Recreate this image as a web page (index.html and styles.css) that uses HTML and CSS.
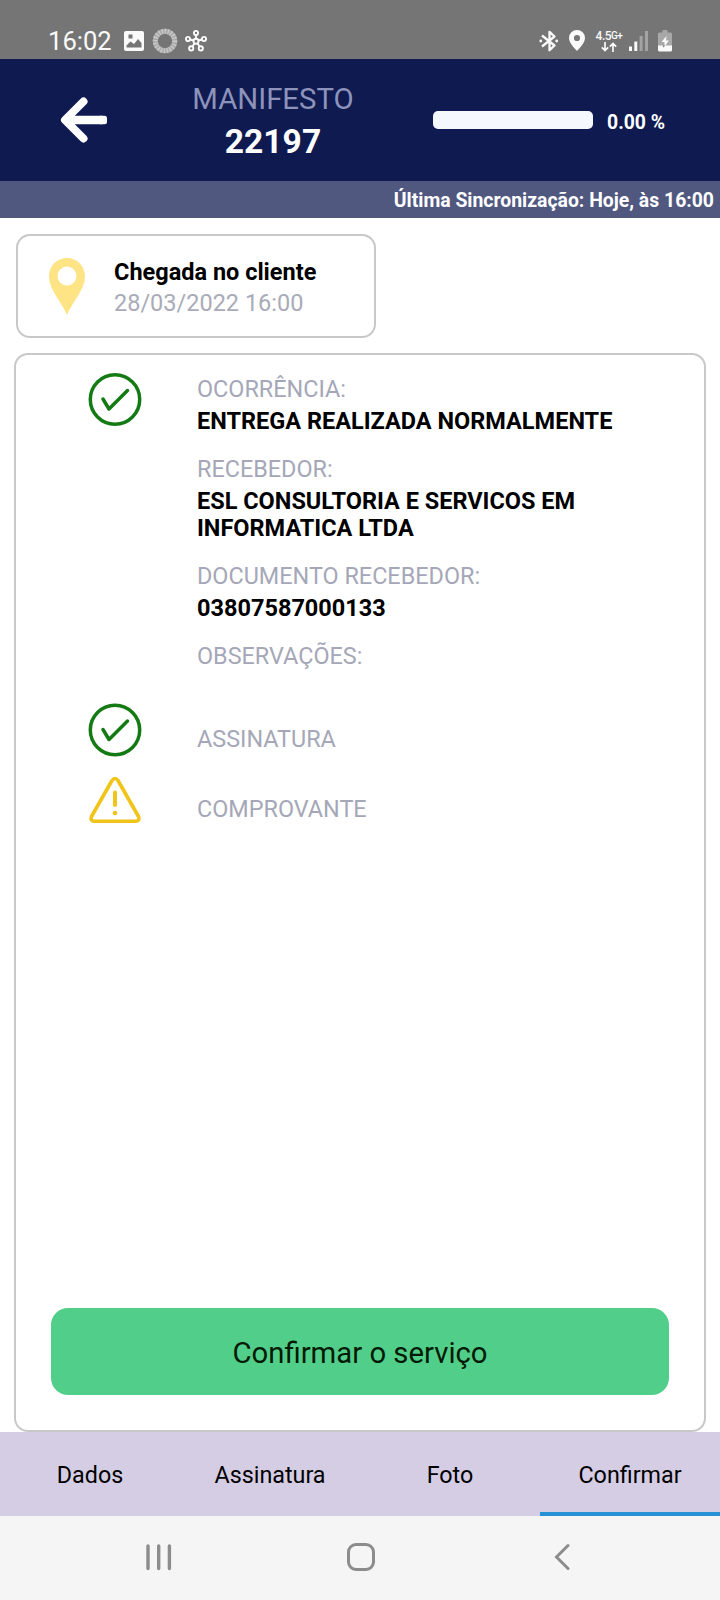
FILE: index.html
```
<!DOCTYPE html>
<html lang="pt-BR">
<head>
  <meta charset="UTF-8" />
  <meta name="viewport" content="width=device-width,initial-scale=1.0" />
  <title>Manifesto 22197</title>
  <link rel="stylesheet" href="styles.css">
</head>
<body>
  <div class="status-bar">
    <span class="clock">16:02</span>
    <svg class="ic-image" width="20" height="20" viewBox="0 0 20 20">
      <path fill="#fafafa" fill-rule="evenodd" d="M2 0H18Q20 0 20 2V18Q20 20 18 20H2Q0 20 0 18V2Q0 0 2 0ZM4.500 3.500V7.500H8.500V3.500ZM2.500 16.500H17.500V12L14 8L10 13L6.500 10.500L2.500 14.500Z"/>
    </svg>
    <svg class="ic-ring" width="26" height="26" viewBox="0 0 26 26">
      <circle cx="13" cy="13" r="9.700" fill="none" stroke="#a8a8a8" stroke-width="5"/>
      <circle cx="13" cy="13" r="9.700" fill="none" stroke="#c8c8c8" stroke-width="5" stroke-dasharray="1.500 1.500"/>
    </svg>
    <svg class="ic-hub" width="22" height="22" viewBox="0 0 22 22" fill="none" stroke="#fafafa" stroke-width="1.900">
      <path d="M11 5V8M5 9.500L8.500 10.500M17 9.500L13.500 10.500M7.300 16.500L9.500 13.500M14.700 16.500L12.500 13.500"/>
      <circle cx="11" cy="11.300" r="2.500"/>
      <circle cx="11" cy="3" r="2.100"/>
      <circle cx="3" cy="9" r="2.100"/>
      <circle cx="19" cy="9" r="2.100"/>
      <circle cx="6.200" cy="18.400" r="2.100"/>
      <circle cx="15.800" cy="18.400" r="2.100"/>
    </svg>
    <div class="status-right">
      <svg width="20" height="22" viewBox="0 0 20 22" fill="none" stroke="#fafafa" stroke-width="2.300">
        <path stroke-linejoin="round" d="M3 5.500L15.500 15.500L10.500 20.200V1.800L15.500 6.500L3 16.500"/>
        <circle cx="1.800" cy="11" r="1.400" fill="#fafafa" stroke="none"/>
        <circle cx="17.700" cy="11" r="1.400" fill="#fafafa" stroke="none"/>
      </svg>
      <svg class="ic-place" width="16" height="21" viewBox="0 0 16 21">
        <path fill="#fafafa" fill-rule="evenodd" d="M8 0A8 8 0 0 1 16 8C16 13 10.500 18 8 21C5.500 18 0 13 0 8A8 8 0 0 1 8 0ZM8 4.900A3.100 3.100 0 1 0 8 11.100A3.100 3.100 0 1 0 8 4.900Z"/>
      </svg>
      <div class="network">
        <span class="network-type">4.5<small>G+</small></span>
        <svg width="16" height="10" viewBox="0 0 16 10" fill="none" stroke="#fafafa" stroke-width="1.700">
          <path d="M4 0V8.500M0.800 5.300L4 8.500L7.200 5.300M12 10V1.500M8.800 4.700L12 1.500L15.200 4.700"/>
        </svg>
      </div>
      <svg class="ic-signal" width="19" height="20" viewBox="0 0 19 20">
        <path fill="#fafafa" d="M0 15.500H3V20H0ZM5.300 10.500H8.300V20H5.300Z"/>
        <path fill="#a3a3a3" d="M10.600 5H13.600V20H10.600ZM16 0H19V20H16Z"/>
      </svg>
      <svg class="ic-battery" width="14" height="22" viewBox="0 0 14 22">
        <path fill="#a8a8a8" d="M4.500 0H9.500V2.500H12.500Q14 2.500 14 4V16H0V4Q0 2.500 1.500 2.500H4.500Z"/>
        <path fill="#fafafa" d="M0 15.500H14V20Q14 21.500 12.500 21.500H1.500Q0 21.500 0 20ZM8.500 6L3.500 12H6.500V16.500L11 10.500H8Z"/>
        <path fill="#777" d="M4.500 15.500H7L5.500 17.500Z"/>
      </svg>
    </div>
  </div>

  <header class="header">
    <svg class="back" width="48" height="46" viewBox="0 0 48 46">
      <path fill="none" stroke="#fff" stroke-width="8" stroke-linecap="round" stroke-linejoin="round" d="M23.500 4.500L5 23L23.500 41.500"/>
      <path fill="none" stroke="#fff" stroke-width="8.500" d="M8 23H42"/>
      <rect x="38" y="18.700" width="9" height="8.600" rx="2.500" fill="#fff"/>
    </svg>
    <div class="manifest">
      <div class="manifest-label">MANIFESTO</div>
      <div class="manifest-number">22197</div>
    </div>
    <div class="progress"></div>
    <div class="percent">0.00 %</div>
  </header>
  <div class="sync">Última Sincronização: Hoje, às 16:00</div>

  <main class="content">
    <div class="arrival">
      <svg width="36" height="57" viewBox="0 0 36 57">
        <path fill="#fee485" fill-rule="evenodd" d="M18 0C8 0 0 8 0 18.500C0 32 13 44 18 57C23 44 36 32 36 18.500C36 8 28 0 18 0ZM18 8.500A9.500 9.500 0 1 1 18 27.500A9.500 9.500 0 1 1 18 8.500Z"/>
      </svg>
      <div class="arrival-text">
        <div class="value">Chegada no cliente</div>
        <div class="arrival-date">28/03/2022 16:00</div>
      </div>
    </div>

    <div class="panel">
      <div class="row row-info">
        <svg width="54" height="54" viewBox="0 0 54 54" fill="none" stroke="#147a14">
          <circle cx="27" cy="26.500" r="24.700" stroke-width="3.500"/>
          <path stroke-width="3.500" stroke-linecap="round" stroke-linejoin="round" d="M15 26L21 36L39.500 17.500"/>
        </svg>
        <div class="fields">
          <div class="field">
            <div class="label">OCORRÊNCIA:</div>
            <div class="value">ENTREGA REALIZADA NORMALMENTE</div>
          </div>
          <div class="field">
            <div class="label">RECEBEDOR:</div>
            <div class="value">ESL CONSULTORIA E SERVICOS EM INFORMATICA LTDA</div>
          </div>
          <div class="field">
            <div class="label">DOCUMENTO RECEBEDOR:</div>
            <div class="value">03807587000133</div>
          </div>
          <div class="field">
            <div class="label">OBSERVAÇÕES:</div>
          </div>
        </div>
      </div>
      <div class="row row-signature">
        <svg width="54" height="54" viewBox="0 0 54 54" fill="none" stroke="#147a14">
          <circle cx="27" cy="27" r="24.700" stroke-width="3.500"/>
          <path stroke-width="3.500" stroke-linecap="round" stroke-linejoin="round" d="M15 26.500L21 36.500L39.500 18"/>
        </svg>
        <div class="label">ASSINATURA</div>
      </div>
      <div class="row row-receipt">
        <svg width="54" height="48" viewBox="0 0 54 48" fill="none" stroke="#f0c419">
          <path stroke-width="3.600" stroke-linejoin="round" d="M24 4.500Q27 0.500 30 4.500L50.500 40.500Q52 45 48 45.200H6Q2 45 3.500 40.500Z"/>
          <path stroke-width="4" stroke-linecap="round" d="M27 16.500V29"/>
          <circle cx="27" cy="37" r="2.300" fill="#f0c419" stroke="none"/>
        </svg>
        <div class="label">COMPROVANTE</div>
      </div>
      <button class="confirm">Confirmar o serviço</button>
    </div>
  </main>

  <nav class="tabs">
    <a class="tab">Dados</a>
    <a class="tab">Assinatura</a>
    <a class="tab">Foto</a>
    <a class="tab active">Confirmar</a>
  </nav>

  <div class="nav-bar">
    <svg width="26" height="28" viewBox="0 0 26 28" fill="none" stroke="#8c8c8c" stroke-width="3.400" stroke-linecap="round">
      <path d="M2 3V25.500M12.700 3V25.500M23.400 3V25.500"/>
    </svg>
    <svg class="home" width="30" height="30" viewBox="0 0 30 30">
      <rect x="2.500" y="2.500" width="25" height="25" rx="7.500" fill="none" stroke="#8c8c8c" stroke-width="3"/>
    </svg>
    <svg width="16" height="28" viewBox="0 0 16 28">
      <path fill="none" stroke="#8c8c8c" stroke-width="3" stroke-linecap="round" stroke-linejoin="miter" d="M14 2.500L2.500 14L14 25.500"/>
    </svg>
  </div>
</body>
</html>
```
FILE: styles.css
```
* {
  box-sizing: border-box;
}

body {
  margin: 0;
  height: 1600px;
  display: flex;
  flex-direction: column;
  background: #fff;
  font-family: Roboto, sans-serif;
  color: #000;
}

svg {
  display: block;
  flex: none;
}

.status-bar {
  height: 59px;
  display: flex;
  align-items: center;
  padding: 22px 48px 0 48px;
  background: #757575;
  color: #fafafa;
}

.clock {
  width: 65px;
  padding-top: 1px;
  font-size: 25.6px;
  line-height: 30px;
}

.ic-image {
  margin-left: 11px;
}

.ic-ring {
  margin-left: 8px;
}

.ic-hub {
  margin-left: 7px;
}

.status-right {
  display: flex;
  align-items: center;
  margin-left: auto;
}

.ic-place {
  margin-left: 10px;
}

.network {
  display: flex;
  flex-direction: column;
  align-items: center;
  width: 28px;
  margin-left: 10px;
}

.network-type {
  font-size: 12px;
  font-weight: 500;
  line-height: 11px;
  letter-spacing: -0.5px;
  white-space: nowrap;
}

.network-type small {
  font-size: 10px;
  vertical-align: 1px;
}

.ic-signal {
  margin-left: 6px;
}

.ic-battery {
  margin-left: 10px;
}

.header {
  height: 122px;
  display: flex;
  align-items: center;
  padding-left: 60px;
  background: #0f1a50;
  color: #fff;
}

.manifest {
  width: 200px;
  margin-left: 65px;
  text-align: center;
}

.manifest-label {
  padding-top: 1px;
  font-size: 29.3px;
  line-height: 36px;
  color: #8d93ba;
}

.manifest-number {
  margin-top: 5px;
  font-size: 33.6px;
  font-weight: 700;
  line-height: 39px;
}

.progress {
  width: 160px;
  height: 18px;
  margin-left: 60px;
  border-radius: 5px;
  background: #f5f8fc;
}

.percent {
  margin: 4px 0 0 14px;
  font-size: 19.4px;
  font-weight: 700;
}

.sync {
  height: 37px;
  padding-right: 6px;
  background: #505880;
  color: #fff;
  font-size: 19.4px;
  font-weight: 700;
  line-height: 40px;
  text-align: right;
}

.content {
  flex: 1;
  display: flex;
  flex-direction: column;
  padding: 16px 14px 0 14px;
}

.arrival {
  width: 360px;
  height: 104px;
  display: flex;
  align-items: center;
  gap: 29px;
  margin-left: 2px;
  padding-left: 31px;
  border: 2px solid #c8c8ca;
  border-radius: 14px;
}

.arrival-text {
  padding-top: 4px;
}

.arrival-date {
  margin-top: 4px;
  font-size: 23.5px;
  line-height: 27px;
  color: #a9abb8;
}

.panel {
  flex: 1;
  display: flex;
  flex-direction: column;
  margin-top: 15px;
  padding: 18px 35px 35px 35px;
  border: 2px solid #c8c8ca;
  border-radius: 14px;
}

.row {
  display: flex;
  gap: 55px;
  padding-left: 37px;
}

.row-info {
  height: 330px;
}

.row-signature {
  height: 73px;
}

.row-signature .label {
  margin-top: 23px;
}

.row-receipt .label {
  margin-top: 20px;
}

.fields {
  width: 430px;
  padding-top: 3px;
}

.field {
  margin-bottom: 21.5px;
}

.label {
  font-size: 23.4px;
  line-height: 27px;
  color: #a5a7b8;
}

.value {
  font-size: 23.5px;
  font-weight: 700;
  line-height: 27px;
}

.field .value {
  margin-top: 4.5px;
}

.confirm {
  height: 87px;
  margin-top: auto;
  padding-top: 4px;
  border: none;
  border-radius: 17px;
  background: #51cf8a;
  color: #041a04;
  font-family: inherit;
  font-size: 29.3px;
}

.tabs {
  height: 84px;
  display: flex;
  background: #d5cde3;
}

.tab {
  flex: 1;
  padding-top: 2px;
  border-bottom: 4px solid transparent;
  font-size: 23.3px;
  line-height: 82px;
  text-align: center;
}

.tab.active {
  border-bottom-color: #2691d6;
}

.nav-bar {
  height: 84px;
  display: flex;
  align-items: center;
  justify-content: space-between;
  padding: 0 150px 2px 146px;
  background: #f5f5f5;
}

.home {
  margin-right: 5px;
}
```
